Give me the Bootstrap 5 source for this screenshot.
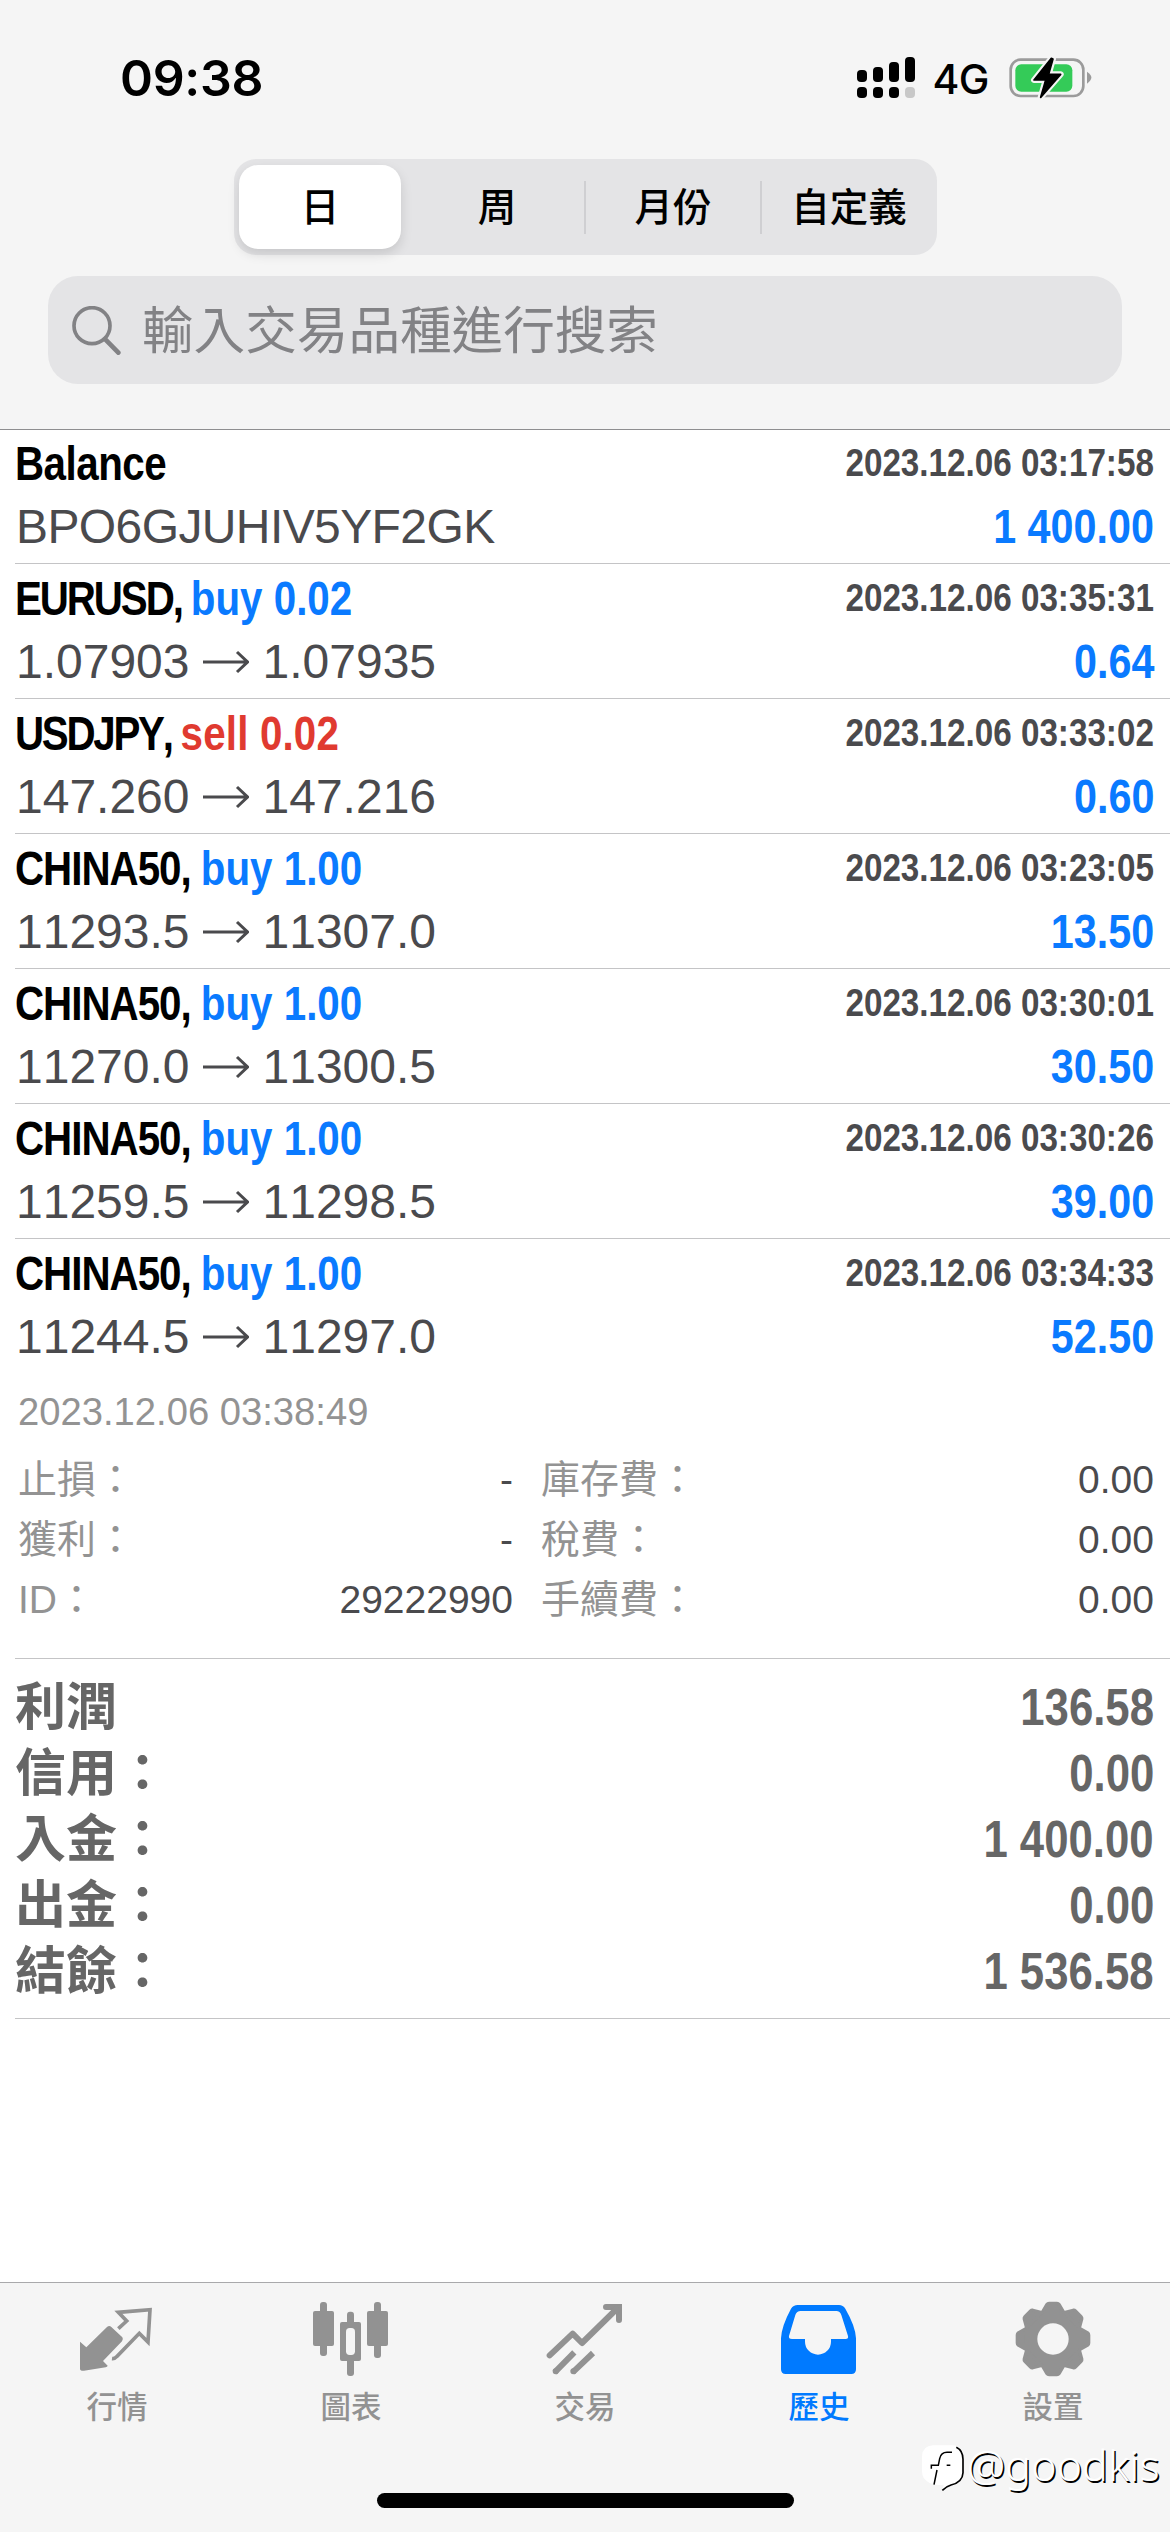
<!DOCTYPE html>
<html lang="zh-Hant">
<head>
<meta charset="utf-8">
<meta name="viewport" content="width=device-width, initial-scale=1">
<title>歷史</title>
<link href="https://cdn.jsdelivr.net/npm/bootstrap@5.3.0/dist/css/bootstrap.min.css" rel="stylesheet">
<style>
  :root { --ink: #4a4a4d; --blue: #0a7aff; --bar: #f5f5f5; --rule: #c4c4c6; --muted: #939393; }
  body { font-family: "Liberation Sans", "Noto Sans CJK TC", sans-serif; background: #fff; color: #000; font-kerning: none; }
  .screen { width: 1170px; height: 2532px; overflow: hidden; }

  /* header */
  .top-area { height: 430px; background: var(--bar); border-bottom: 1px solid #8e8e90; }
  .status { height: 159px; padding: 0 78px 3px 120px; font-family: Inter, sans-serif; }
  .clock { font-size: 50px; font-weight: 600; letter-spacing: -.3px; line-height: 60px; }
  .net { font-size: 41px; font-weight: 500; line-height: 60px; margin: 2px 20px 0 16px; letter-spacing: -.5px; }
  .segments { width: 703px; height: 96px; margin: 0 0 21px 234px; padding: 6px 0 6px 5px; border-radius: 22px; background: #e4e4e6; font-family: "Noto Sans CJK TC", sans-serif; font-size: 38.5px; font-weight: 500; }
  .seg { width: 176px; height: 84px; line-height: 78px; }
  .seg.chosen { width: 162px; margin-right: 8px; background: #fff; border-radius: 19px; box-shadow: 0 5px 12px rgba(0,0,0,.13); }
  .seg-rule { width: 2px; height: 53px; margin: 0 -1px; background: #cfcfd2; }
  .finder { height: 108px; margin: 0 48px; padding: 0 24px; border-radius: 30px; background: #e4e4e6; color: #828285; font-family: "Noto Sans CJK TC", sans-serif; font-size: 51.6px; line-height: 100px; }
  .finder span { margin-left: 21px; margin-top: -6px; }

  /* deals */
  .deal { height: 135px; margin-left: 15px; padding: 3px 16px 0 0; border-bottom: 1px solid var(--rule); }
  .deal:first-child { height: 134px; padding-top: 2px; }
  .deal:last-child { border-bottom: 0; }
  .line { height: 63px; line-height: 63px; white-space: nowrap; }
  .headline { font-size: 48px; font-weight: 700; transform: scaleX(.84); transform-origin: 0 50%; }
  .k-balance { letter-spacing: -.6px; }
  .k-eur { letter-spacing: -2.5px; }
  .k-jpy { letter-spacing: -2.7px; }
  .k-china { letter-spacing: -1.2px; }
  .is-buy { color: var(--blue); }
  .is-sell { color: #e03a30; letter-spacing: .2px; }
  .when { font-size: 38px; font-weight: 700; line-height: 63px; color: var(--ink); transform: scaleX(.874); transform-origin: 100% 50%; }
  .prices { font-size: 48px; color: var(--ink); padding-left: 1px; }
  .prices svg { margin: 0 14px 0 13px; }
  .code-text { letter-spacing: -.6px; }
  .gain { font-size: 48px; font-weight: 700; color: var(--blue); transform: scaleX(.86); transform-origin: 100% 50%; }

  /* open deal details */
  .details { height: 285px; margin-left: 15px; padding: 7px 16px 0 3px; border-bottom: 1px solid var(--rule); font-size: 39px; color: var(--ink); }
  .stamp { font-size: 38.2px; height: 69px; line-height: 62px; color: var(--muted); }
  .detail-row { height: 60px; line-height: 60px; }
  .half-a { width: 495px; }
  .half-b { padding-left: 28px; }
  .tag { color: var(--muted); }

  /* totals */
  .totals { height: 360px; margin-left: 15px; padding: 16px 16px 0 0; border-bottom: 1px solid var(--rule); font-size: 51px; font-weight: 700; color: #666; }
  .total-row { height: 66px; line-height: 66px; }
  .sum { transform: scaleX(.857); transform-origin: 100% 50%; }

  /* tab bar */
  .tabs { height: 250px; background: var(--bar); border-top: 1px solid #a9a9ab; padding-top: 16px; }
  .tab { width: 234px; color: #929292; font-family: "Noto Sans CJK TC", sans-serif; font-size: 30.5px; font-weight: 500; line-height: 44px; }
  .tab.current { color: #007aff; }
  .tab span { margin-top: 4px; }
  .home-bar { left: 377px; top: 2493px; width: 417px; height: 15px; border-radius: 8px; background: #000; }
  .credit { left: 921px; top: 2440px; height: 54px; font-family: "Noto Sans", sans-serif; font-weight: 300; font-size: 43px; line-height: 54px; color: #fff; text-shadow: 1.5px 1.5px 0 #000; white-space: nowrap; }
  .credit span { margin: -4px 0 0 -2px; letter-spacing: .1px; }
</style>
<script src="https://cdn.jsdelivr.net/npm/bootstrap@5.3.0/dist/js/bootstrap.bundle.min.js"></script>
</head>
<body>
<svg class="d-none">
  <symbol id="arrow" viewBox="0 0 46 24"><path d="M0 12H44M34 2L44.500 12L34 22" fill="none" stroke="#4a4a4d" stroke-width="3"/></symbol>
</svg>
<div class="screen position-relative d-flex flex-column">
  <header class="top-area flex-shrink-0">
    <div class="status d-flex align-items-center">
      <div class="clock me-auto">09:38</div>
      <svg width="59" height="42" viewBox="0 0 59 42">
        <rect x="0" y="13" width="10" height="12" rx="4"/><rect x="16" y="10" width="10" height="15" rx="4"/><rect x="32" y="5" width="10" height="20" rx="4"/><rect x="48" y="0" width="10" height="25" rx="4"/>
        <rect x="0" y="30" width="10" height="11" rx="4"/><rect x="16" y="30" width="10" height="11" rx="4"/><rect x="32" y="30" width="10" height="11" rx="4"/><rect x="48" y="30" width="10" height="11" rx="4" fill="#c8c8c8"/>
      </svg>
      <div class="net">4G</div>
      <svg width="83" height="42" viewBox="566 80 249 126">
        <rect x="571" y="88" width="218" height="109" rx="30" fill="none" stroke="#9b9b9b" stroke-width="8"/>
        <path d="M800 124q26 17 0 36z" fill="#9b9b9b"/>
        <rect x="585" y="102" width="171" height="82" rx="18" fill="#34cb58"/>
        <path d="M693 84L641 149H676L661 201L721 132H685L698 86Z" fill="#000" stroke="#f5f5f5" stroke-width="18" stroke-linejoin="round" paint-order="stroke"/>
        <path d="M693 84L641 149H676L661 201L721 132H685L698 86Z" stroke="#000" stroke-width="5" stroke-linejoin="round"/>
      </svg>
    </div>
    <div class="segments d-flex align-items-center text-center">
      <div class="seg chosen">日</div>
      <div class="seg">周</div><div class="seg-rule"></div>
      <div class="seg">月份</div><div class="seg-rule"></div>
      <div class="seg">自定義</div>
    </div>
    <div class="finder d-flex align-items-center">
      <svg width="49" height="49" viewBox="216 135 147 147" fill="none" stroke="#828285" stroke-linecap="round"><circle cx="276" cy="194" r="54" stroke-width="11"/><path d="M316 235L355 275" stroke-width="14"/></svg>
      <span>輸入交易品種進行搜索</span>
    </div>
  </header>

  <main class="flex-grow-1">
    <section>
      <div class="deal">
        <div class="line d-flex justify-content-between"><div class="headline"><span class="k-balance">Balance</span></div><div class="when">2023.12.06 03:17:58</div></div>
        <div class="line d-flex justify-content-between"><div class="prices code-text">BPO6GJUHIV5YF2GK</div><div class="gain">1 400.00</div></div>
      </div>
      <div class="deal">
        <div class="line d-flex justify-content-between"><div class="headline"><span class="k-eur">EURUSD, </span><span class="is-buy">buy 0.02</span></div><div class="when">2023.12.06 03:35:31</div></div>
        <div class="line d-flex justify-content-between"><div class="prices d-flex align-items-center">1.07903<svg width="46" height="24"><use href="#arrow"/></svg>1.07935</div><div class="gain">0.64</div></div>
      </div>
      <div class="deal">
        <div class="line d-flex justify-content-between"><div class="headline"><span class="k-jpy">USDJPY, </span><span class="is-sell">sell 0.02</span></div><div class="when">2023.12.06 03:33:02</div></div>
        <div class="line d-flex justify-content-between"><div class="prices d-flex align-items-center">147.260<svg width="46" height="24"><use href="#arrow"/></svg>147.216</div><div class="gain">0.60</div></div>
      </div>
      <div class="deal">
        <div class="line d-flex justify-content-between"><div class="headline"><span class="k-china">CHINA50, </span><span class="is-buy">buy 1.00</span></div><div class="when">2023.12.06 03:23:05</div></div>
        <div class="line d-flex justify-content-between"><div class="prices d-flex align-items-center">11293.5<svg width="46" height="24"><use href="#arrow"/></svg>11307.0</div><div class="gain">13.50</div></div>
      </div>
      <div class="deal">
        <div class="line d-flex justify-content-between"><div class="headline"><span class="k-china">CHINA50, </span><span class="is-buy">buy 1.00</span></div><div class="when">2023.12.06 03:30:01</div></div>
        <div class="line d-flex justify-content-between"><div class="prices d-flex align-items-center">11270.0<svg width="46" height="24"><use href="#arrow"/></svg>11300.5</div><div class="gain">30.50</div></div>
      </div>
      <div class="deal">
        <div class="line d-flex justify-content-between"><div class="headline"><span class="k-china">CHINA50, </span><span class="is-buy">buy 1.00</span></div><div class="when">2023.12.06 03:30:26</div></div>
        <div class="line d-flex justify-content-between"><div class="prices d-flex align-items-center">11259.5<svg width="46" height="24"><use href="#arrow"/></svg>11298.5</div><div class="gain">39.00</div></div>
      </div>
      <div class="deal">
        <div class="line d-flex justify-content-between"><div class="headline"><span class="k-china">CHINA50, </span><span class="is-buy">buy 1.00</span></div><div class="when">2023.12.06 03:34:33</div></div>
        <div class="line d-flex justify-content-between"><div class="prices d-flex align-items-center">11244.5<svg width="46" height="24"><use href="#arrow"/></svg>11297.0</div><div class="gain">52.50</div></div>
      </div>
    </section>

    <section class="details">
      <div class="stamp">2023.12.06 03:38:49</div>
      <div class="detail-row d-flex"><div class="half-a d-flex justify-content-between"><span class="tag">止損：</span><span>-</span></div><div class="half-b flex-grow-1 d-flex justify-content-between"><span class="tag">庫存費：</span><span>0.00</span></div></div>
      <div class="detail-row d-flex"><div class="half-a d-flex justify-content-between"><span class="tag">獲利：</span><span>-</span></div><div class="half-b flex-grow-1 d-flex justify-content-between"><span class="tag">稅費：</span><span>0.00</span></div></div>
      <div class="detail-row d-flex"><div class="half-a d-flex justify-content-between"><span class="tag">ID：</span><span>29222990</span></div><div class="half-b flex-grow-1 d-flex justify-content-between"><span class="tag">手續費：</span><span>0.00</span></div></div>
    </section>

    <section class="totals">
      <div class="total-row d-flex justify-content-between"><span>利潤</span><span class="sum">136.58</span></div>
      <div class="total-row d-flex justify-content-between"><span>信用：</span><span class="sum">0.00</span></div>
      <div class="total-row d-flex justify-content-between"><span>入金：</span><span class="sum">1 400.00</span></div>
      <div class="total-row d-flex justify-content-between"><span>出金：</span><span class="sum">0.00</span></div>
      <div class="total-row d-flex justify-content-between"><span>結餘：</span><span class="sum">1 536.58</span></div>
    </section>
  </main>

  <nav class="tabs d-flex flex-shrink-0">
    <div class="tab d-flex flex-column align-items-center">
      <svg width="80" height="80" viewBox="231 117 240 240" fill="currentColor"><path d="M240 245L259 262L321 201q7-6 13 0L367 232q4 6-1 12L309 303L323 317Q322 321 317 322L252 332Q240 333 240 326Z"/><path d="M355 206L380 183L355 157L450 149L444 246L418 220L350 290Q344 297 336 296" fill="none" stroke="currentColor" stroke-width="11"/></svg>
      <span>行情</span>
    </div>
    <div class="tab d-flex flex-column align-items-center">
      <svg width="80" height="80" viewBox="933 117 240 240" fill="currentColor"><rect x="960" y="126" width="21" height="162" rx="9"/><rect x="939" y="153" width="63" height="105" rx="6"/><rect x="1041" y="155" width="21" height="193" rx="9"/><rect x="1020" y="186" width="63" height="117" rx="6"/><rect x="1038" y="204" width="27" height="81" rx="11" fill="#f5f5f5"/><rect x="1122" y="126" width="21" height="168" rx="9"/><rect x="1101" y="153" width="63" height="105" rx="6"/></svg>
      <span>圖表</span>
    </div>
    <div class="tab d-flex flex-column align-items-center">
      <svg width="80" height="80" viewBox="315 117 240 240" fill="none" stroke="currentColor" stroke-width="18"><path d="M329 286L398 221L426 249L530 147" stroke-linecap="round" stroke-linejoin="round"/><path d="M498 141H537V180" stroke-linecap="round"/><path d="M522 141L537 157" /><path d="M344 337L403 277M398 337L459 279"/><path d="M347 334h.1M400 334h.1" stroke-linecap="round"/></svg>
      <span>交易</span>
    </div>
    <div class="tab current d-flex flex-column align-items-center">
      <svg width="80" height="80" viewBox="1017 117 240 240" fill="currentColor"><path fill-rule="evenodd" d="M1023 235Q1024 200 1053 146Q1060 135 1073 135H1197Q1209 135 1216 146Q1247 200 1248 235V328Q1248 342 1234 342H1037Q1023 342 1023 328ZM1047 228L1066 165Q1070 153 1082 153H1189Q1200 153 1204 165L1224 228Q1226 237 1217 237H1173V245a39 39 0 0 1-78 0V237H1056Q1045 237 1047 228Z"/></svg>
      <span>歷史</span>
    </div>
    <div class="tab d-flex flex-column align-items-center">
      <svg width="80" height="80" viewBox="-120 -120 240 240" fill="currentColor">
        <defs><path id="tooth" d="M-32 -80L-18 -104Q-16 -107 -12 -107H12Q16 -107 18 -104L32 -80Z" stroke="currentColor" stroke-width="10" stroke-linejoin="round"/></defs>
        <circle r="90"/><use href="#tooth"/><use href="#tooth" transform="rotate(45)"/><use href="#tooth" transform="rotate(90)"/><use href="#tooth" transform="rotate(135)"/><use href="#tooth" transform="rotate(180)"/><use href="#tooth" transform="rotate(225)"/><use href="#tooth" transform="rotate(270)"/><use href="#tooth" transform="rotate(315)"/>
        <circle r="47" fill="#f5f5f5"/>
      </svg>
      <span>設置</span>
    </div>
  </nav>

  <div class="home-bar position-absolute"></div>
  <div class="credit position-absolute d-flex align-items-center">
    <svg width="48" height="50" viewBox="272 552 144 150">
      <path d="M308 562H366Q400 564 400 600V644Q398 676 360 683Q350 686 336 698L340 680Q300 686 280 660Q275 650 275 640V595Q276 564 308 562Z" fill="#fff"/>
      <path d="M378 568Q398 578 398 604V644Q397 672 362 681Q348 685 336 697" fill="none" stroke="#000" stroke-width="5"/>
      <path d="M365 583H350Q332 583 328 602L324 622H303V632M349 622H360M320 636L311 680" fill="none" stroke="#000" stroke-width="4.500"/>
    </svg>
    <span>@goodkis</span>
  </div>
</div>
</body>
</html>
